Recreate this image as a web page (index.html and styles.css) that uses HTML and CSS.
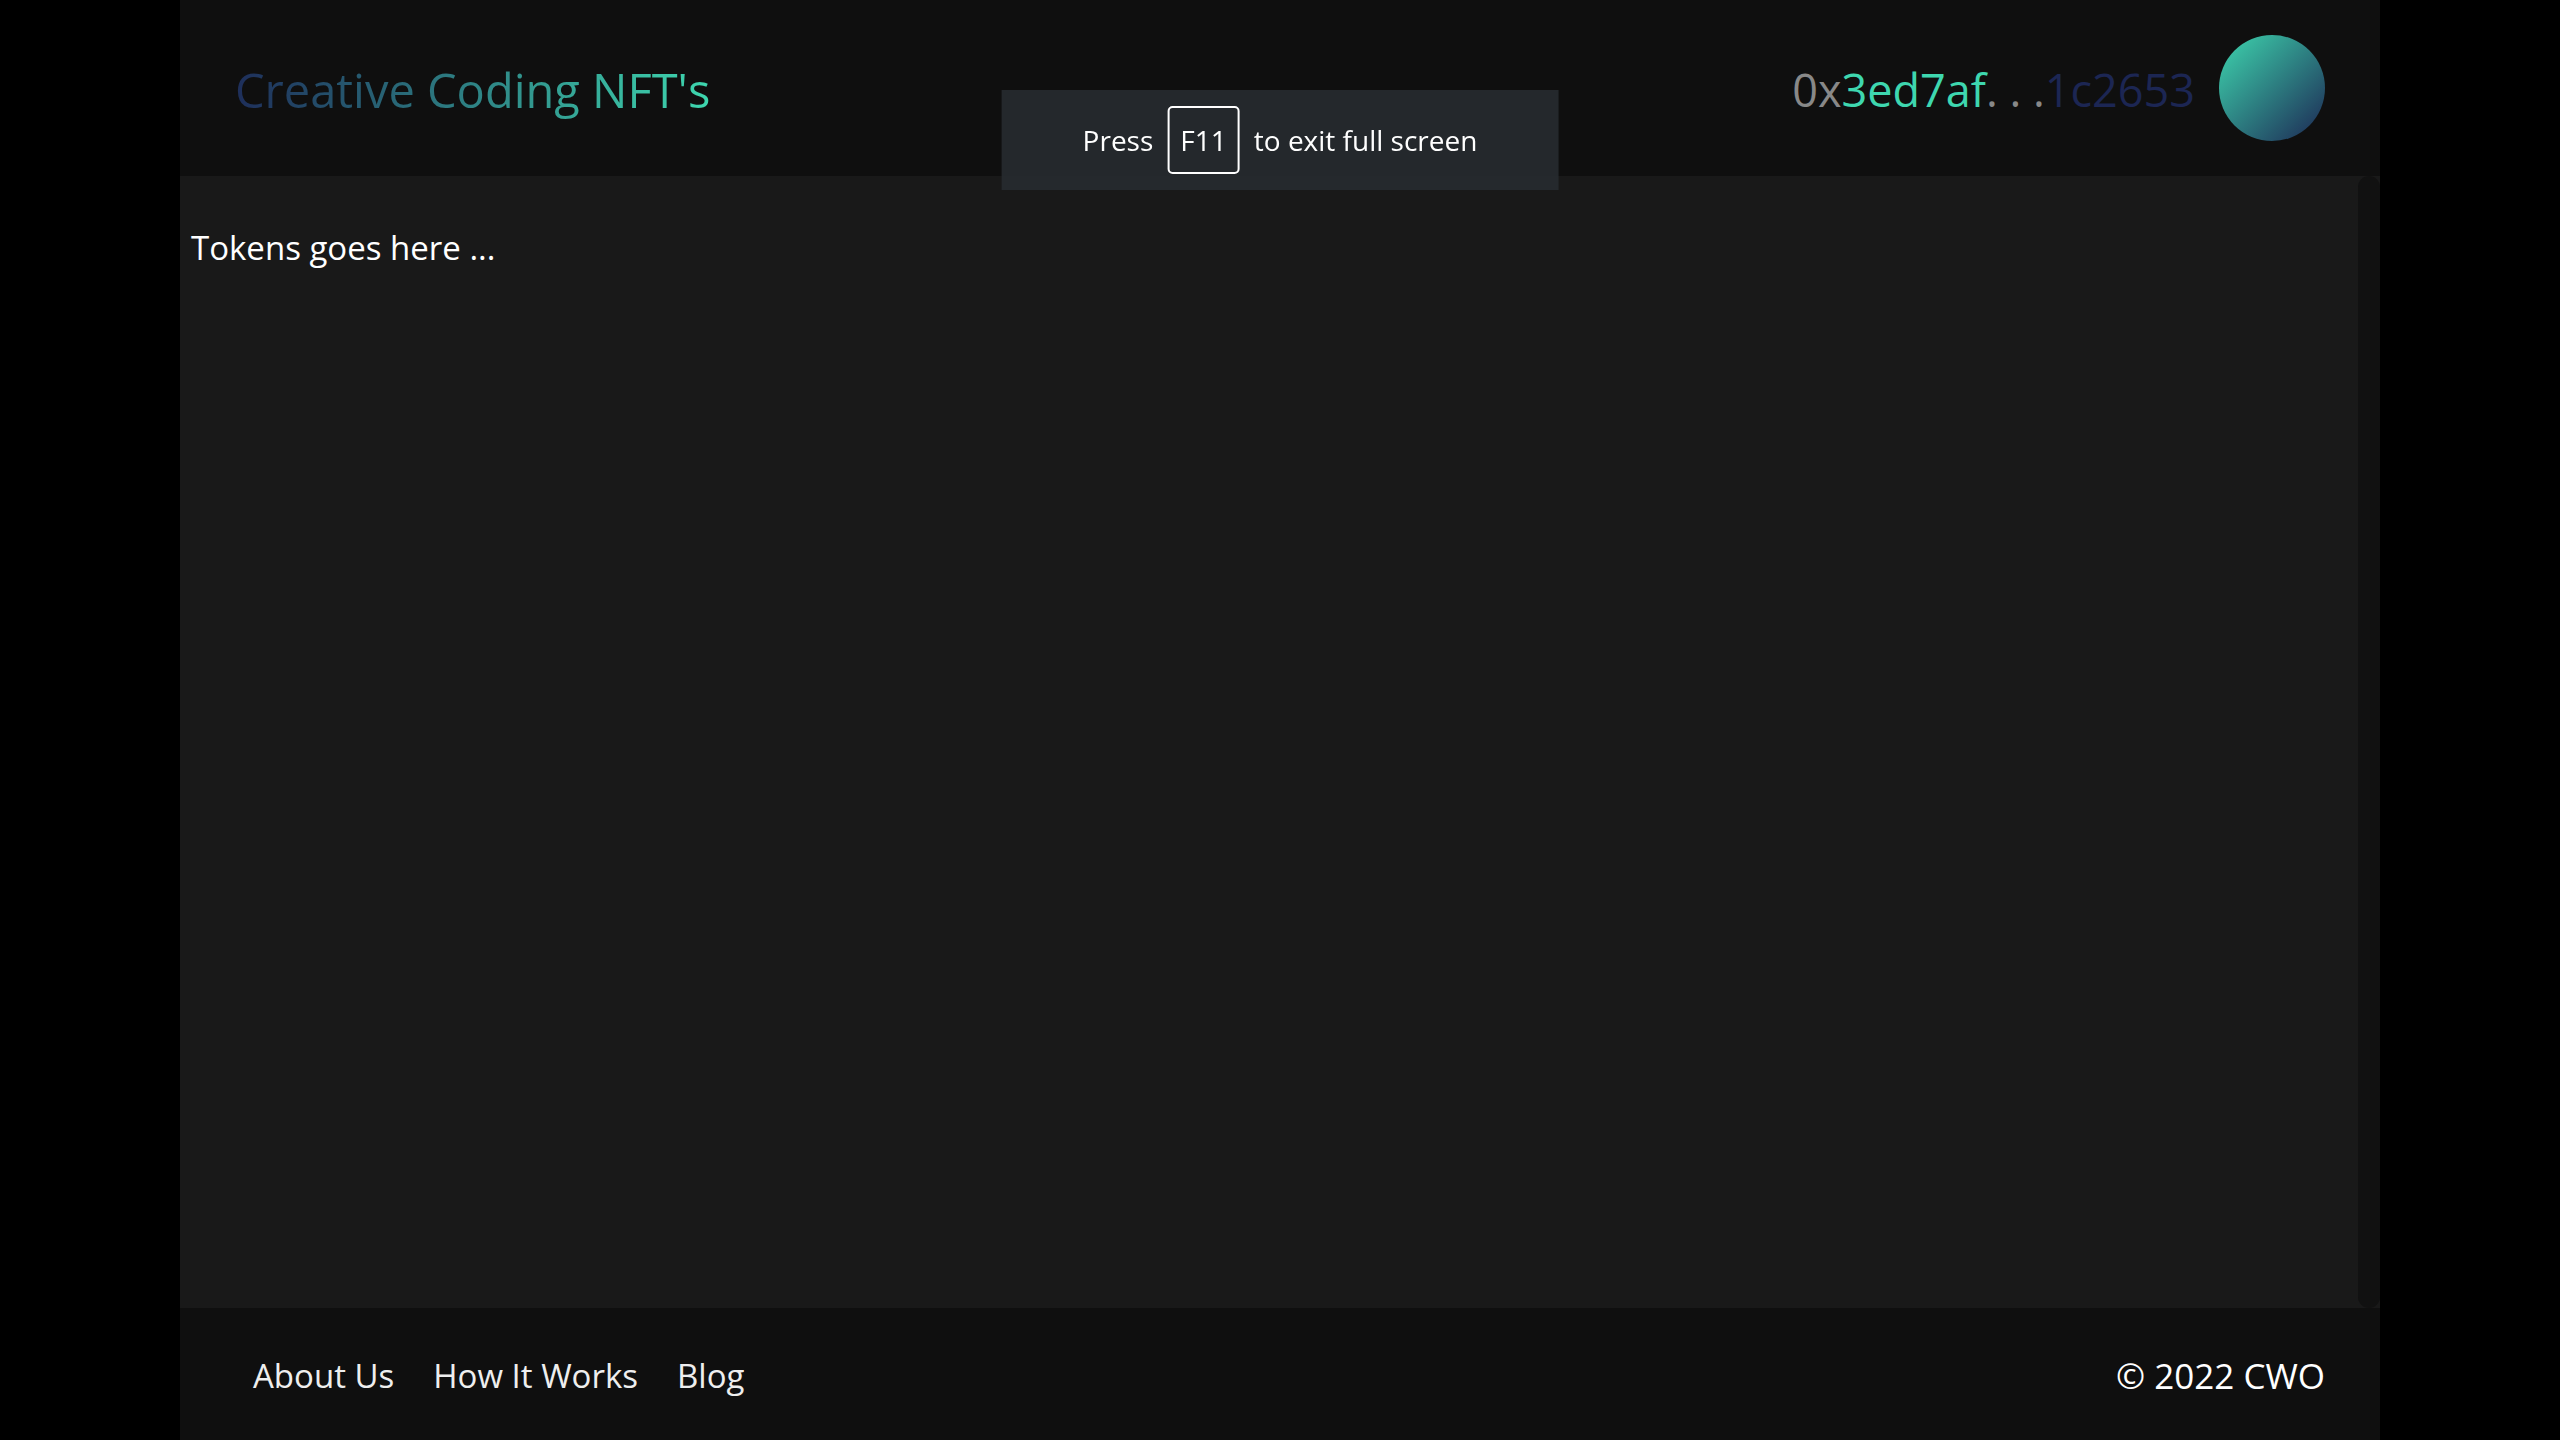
FILE: index.html
```html
<!DOCTYPE html>
<html lang="en">
<head>
  <meta charset="utf-8">
  <meta name="viewport" content="width=device-width, initial-scale=1">
  <title>Creative Coding NFT's</title>
  <link rel="stylesheet" href="styles.css">
</head>
<body>
  <div class="app">
    <header class="header">
      <h1 class="brand">Creative Coding NFT's</h1>
      <div class="account">
        <span class="address">0x<span class="address-start">3ed7af</span>. . .<span class="address-end">1c2653</span></span>
        <span class="avatar"></span>
      </div>
    </header>
    <main class="content">
      <p class="tokens">Tokens goes here ...</p>
      <div class="track"></div>
    </main>
    <footer class="footer">
      <nav class="links">
        <a href="#about">About Us</a>
        <a href="#how">How It Works</a>
        <a href="#blog">Blog</a>
      </nav>
      <span class="copyright">© 2022 CWO</span>
    </footer>
  </div>
  <div class="notice" role="status">
    <span>Press</span>
    <kbd class="key">F11</kbd>
    <span>to exit full screen</span>
  </div>
</body>
</html>
```
FILE: styles.css
```css
* {
  box-sizing: border-box;
}

body {
  margin: 0;
  background: #000;
  color: #fff;
  font-family: "Segoe UI", "Open Sans", "Noto Sans", sans-serif;
  font-size: 33px;
  line-height: 48px;
}

.app {
  display: flex;
  flex-direction: column;
  max-width: 2200px;
  min-height: 100vh;
  margin: 0 auto;
}

.header,
.footer {
  display: flex;
  align-items: center;
  justify-content: space-between;
  background: #0f0f0f;
}

.header {
  padding: 35px 55px;
}

.brand {
  margin: 0;
  padding-top: 4px;
  background: linear-gradient(to right, #1e2e5a, #3ed7af);
  background-clip: text;
  -webkit-background-clip: text;
  color: transparent;
  font-size: 47px;
  font-weight: 400;
  line-height: 64px;
}

.account {
  display: flex;
  align-items: center;
  gap: 24px;
  font-size: 45px;
  line-height: 64px;
}

.address {
  padding-top: 4px;
  color: #888;
}

.address-start {
  color: #3ed7af;
}

.address-end {
  color: #1c2653;
}

.avatar {
  width: 106px;
  height: 106px;
  border-radius: 50%;
  background: linear-gradient(135deg, #3ed7af, #1c2653);
}

.content {
  display: flex;
  flex: 1;
  justify-content: space-between;
  background: #191919;
}

.tokens {
  margin: 0;
  padding: 48px 11px;
}

.track {
  width: 22px;
  border-radius: 11px;
  background: #111;
}

.footer {
  padding: 44px 55px 40px;
}

.links {
  display: flex;
  gap: 39px;
  padding-left: 18px;
}

.links a {
  color: #eee;
  text-decoration: none;
}

.copyright {
  font-size: 35px;
}

.notice {
  position: fixed;
  top: 90px;
  left: 50%;
  display: flex;
  align-items: center;
  justify-content: center;
  gap: 14px;
  padding: 16px 81px;
  background: rgba(38, 42, 47, 0.92);
  font-size: 28px;
  line-height: 40px;
  white-space: nowrap;
  transform: translateX(-50%);
}

.key {
  padding: 12px 11px;
  border: 2px solid #fff;
  border-radius: 5px;
  font-family: inherit;
  font-size: 28px;
}
```
